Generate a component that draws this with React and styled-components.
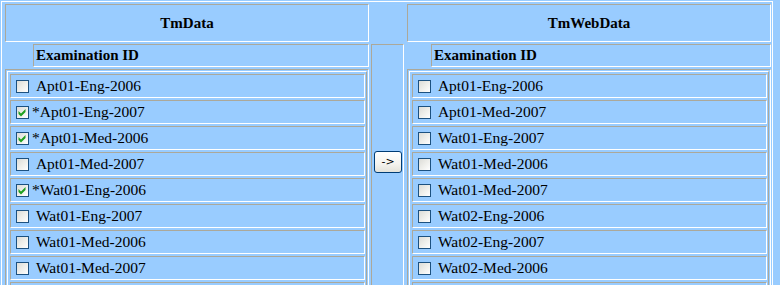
import React from 'react';
import styled, { createGlobalStyle, css } from 'styled-components';

const GREY = '#ACA899';

const Global = createGlobalStyle`
  html, body { margin: 0; padding: 0; background: #99CCFF; overflow: hidden; }
  body { font-family: "Liberation Serif", "Times New Roman", serif; color: #000; }
`;

const inset = css`
  border: 1px solid;
  border-color: ${GREY} #fff #fff ${GREY};
  box-sizing: border-box;
`;

const outset = css`
  border: 1px solid;
  border-color: #fff ${GREY} ${GREY} #fff;
  box-sizing: border-box;
`;

const Frame = styled.div`
  margin: 1px 0 0 1px;
  width: 772px;
  box-sizing: border-box;
  border: 1px solid #fff;
  border-bottom: none;
  padding: 2px 1px 0 3px;
  display: grid;
  grid-template-columns: 364px 34px 364px;
  grid-template-rows: 38px 23px auto;
  column-gap: 2px;
  row-gap: 2px;
`;

const TitleCell = styled.div`
  ${inset};
  grid-row: 1;
  grid-column: ${(p) => p.$col};
  display: flex;
  align-items: center;
  justify-content: center;
  font-weight: bold;
  font-size: 15px;
`;

const HeaderCell = styled.div`
  ${inset};
  grid-row: 2;
  grid-column: ${(p) => p.$col};
  margin-left: ${(p) => p.$indent}px;
  display: flex;
  align-items: center;
  padding-left: 2px;
  font-weight: bold;
  font-size: 15px;
`;

const ArrowCell = styled.div`
  ${inset};
  grid-column: 2;
  grid-row: 2 / span 2;
  width: 33px;
  display: flex;
  justify-content: center;
  align-items: flex-start;
  padding-top: 106px;
`;

const MoveButton = styled.button`
  width: 28px;
  height: 22px;
  padding: 0;
  margin: 0 0 0 1px;
  border: 1px solid #003C74;
  border-radius: 3px;
  background: linear-gradient(180deg, #ffffff 0%, #f4f3ee 60%, #e3e2da 100%);
  font-family: "DejaVu Sans", "Liberation Sans", sans-serif;
  font-size: 11px;
  color: #000;
  line-height: 18px;
`;

const ListCell = styled.div`
  ${inset};
  grid-row: 3;
  grid-column: ${(p) => p.$col};
  padding: 1px;
`;

const ListTable = styled.div`
  ${outset};
  padding: 2px 1px 2px 2px;
  display: flex;
  flex-direction: column;
  gap: 2px;
`;

const Item = styled.div`
  ${inset};
  height: 24px;
  display: flex;
  align-items: center;
  padding-left: 1px;
  font-size: 15.5px;
  white-space: pre;
`;

const Box = styled.span`
  width: 13px;
  height: 13px;
  box-sizing: border-box;
  margin: 0 3px 0 4px;
  border: 1px solid #1C5180;
  background: linear-gradient(135deg, #dcdcd7 0%, #f0f0ec 55%, #ffffff 100%);
  display: inline-flex;
  align-items: center;
  justify-content: center;
  flex: none;
`;

const Label = styled.span`
  line-height: normal;
`;

function CheckBox({ checked }) {
  return (
    <Box role="checkbox" aria-checked={checked}>
      {checked && (
        <svg width="11" height="11" viewBox="0 0 11 11">
          <path d="M1.5 4 L4 6.5 L8.5 2 L8.5 5 L4 9.5 L1.5 7 Z" fill="#21A121" />
        </svg>
      )}
    </Box>
  );
}

const leftItems = [
  ['Apt01-Eng-2006', false],
  ['Apt01-Eng-2007', true],
  ['Apt01-Med-2006', true],
  ['Apt01-Med-2007', false],
  ['Wat01-Eng-2006', true],
  ['Wat01-Eng-2007', false],
  ['Wat01-Med-2006', false],
  ['Wat01-Med-2007', false],
];

const rightItems = [
  'Apt01-Eng-2006',
  'Apt01-Med-2007',
  'Wat01-Eng-2007',
  'Wat01-Med-2006',
  'Wat01-Med-2007',
  'Wat02-Eng-2006',
  'Wat02-Eng-2007',
  'Wat02-Med-2006',
];

export default function App() {
  return (
    <>
      <Global />
      <Frame>
        <TitleCell $col={1}>TmData</TitleCell>
        <TitleCell $col={3}>TmWebData</TitleCell>

        <HeaderCell $col={1} $indent={28}>Examination ID</HeaderCell>
        <HeaderCell $col={3} $indent={24}>Examination ID</HeaderCell>

        <ArrowCell>
          <MoveButton type="button">-&gt;</MoveButton>
        </ArrowCell>

        <ListCell $col={1}>
          <ListTable>
            {leftItems.map(([name, checked]) => (
              <Item key={name}>
                <CheckBox checked={checked} />
                <Label>{(checked ? '*' : '\u00a0') + name}</Label>
              </Item>
            ))}
            <Item />
          </ListTable>
        </ListCell>

        <ListCell $col={3}>
          <ListTable>
            {rightItems.map((name) => (
              <Item key={name}>
                <CheckBox checked={false} />
                <Label>{'\u00a0' + name}</Label>
              </Item>
            ))}
            <Item />
          </ListTable>
        </ListCell>
      </Frame>
    </>
  );
}
